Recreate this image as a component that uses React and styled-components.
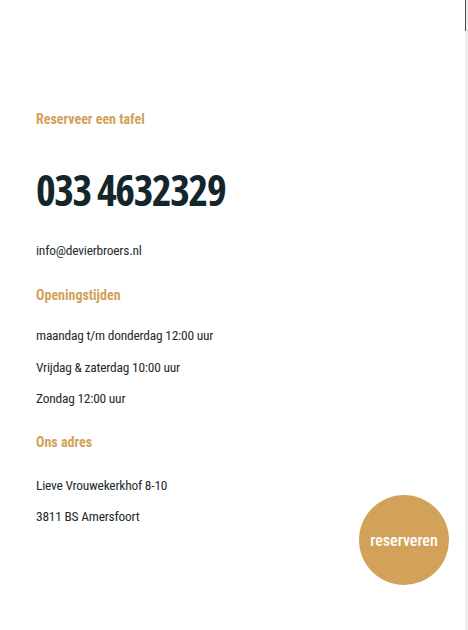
import styled, { createGlobalStyle } from 'styled-components'

const GlobalStyle = createGlobalStyle`
  html, body {
    margin: 0;
    padding: 0;
    background: #ffffff;
  }
  body {
    font-family: Roboto, "Open Sans", "Liberation Sans", sans-serif;
    font-stretch: 75%;
    color: #13262b;
  }
`

const Page = styled.main`
  position: relative;
  width: 468px;
  height: 630px;
  box-sizing: border-box;
  padding: 110px 36px 0 36px;
`

const Label = styled.h3`
  margin: 0;
  font-size: 14px;
  font-weight: 700;
  color: #d2a25a;
  line-height: 18px;
`

const Phone = styled.h2`
  margin: 0;
  font-family: "Open Sans", Roboto, sans-serif;
  font-stretch: 75%;
  font-size: 42px;
  font-weight: 700;
  line-height: 48px;
  color: #13262b;
  letter-spacing: -1.4px;
`

const Line = styled.p`
  margin: 0;
  font-size: 13.4px;
  line-height: 18px;
  letter-spacing: -0.2px;
  color: #1c2b30;
`

const Section = styled.section`
  display: flex;
  flex-direction: column;
  gap: ${p => p.$gap || 13}px;
  margin-top: ${p => p.$top || 0}px;
`

const Round = styled.button`
  position: absolute;
  left: 359px;
  top: 495px;
  width: 90px;
  height: 90px;
  border: none;
  border-radius: 50%;
  background: #d2a25a;
  color: #ffffff;
  font-family: inherit;
  font-stretch: 75%;
  font-size: 16px;
  font-weight: 500;
  padding: 0;
  cursor: pointer;
`

const Track = styled.div`
  position: fixed;
  top: 0;
  right: 0;
  width: 3px;
  height: 100%;
  background: #eeeeee;
`

const Thumb = styled.div`
  position: fixed;
  top: 0;
  right: 2px;
  width: 1px;
  height: 31px;
  background: #3b4a4f;
`

function App() {
  return (
    <>
      <GlobalStyle />
      <Page>
        <Label>Reserveer een tafel</Label>
        <Section $top={38}>
          <Phone>033 4632329</Phone>
        </Section>
        <Section $top={28}>
          <Line>info@devierbroers.nl</Line>
        </Section>
        <Section $top={26}>
          <Label>Openingstijden</Label>
        </Section>
        <Section $top={23} $gap={13.5}>
          <Line>maandag t/m donderdag 12:00 uur</Line>
          <Line>Vrijdag &amp; zaterdag 10:00 uur</Line>
          <Line>Zondag 12:00 uur</Line>
        </Section>
        <Section $top={25}>
          <Label>Ons adres</Label>
        </Section>
        <Section $top={26}>
          <Line>Lieve Vrouwekerkhof 8-10</Line>
          <Line>3811 BS Amersfoort</Line>
        </Section>
        <Round>reserveren</Round>
      </Page>
      <Track />
      <Thumb />
    </>
  )
}

export default App
